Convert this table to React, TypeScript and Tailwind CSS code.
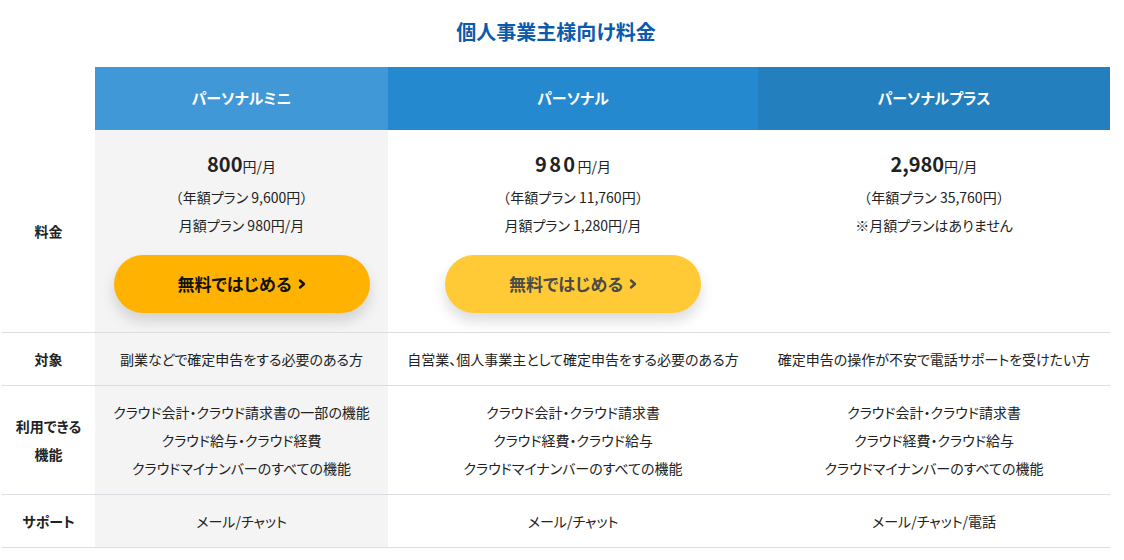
import React from 'react';

const font = { fontFamily: '"Noto Sans CJK JP", "Noto Sans", sans-serif' };

type Plan = {
  name: string;
  head: string;
  body: string;
  price: string;
  priceClass?: string;
  yearly: string;
  monthly: string;
  button?: 'primary' | 'secondary';
  target: string;
  features: string[];
  support: string;
};

const plans: Plan[] = [
  {
    name: 'パーソナルミニ',
    head: 'bg-[#4198d7]',
    body: 'bg-[#f4f4f4]',
    price: '800',
    yearly: '年額プラン 9,600円',
    monthly: '月額プラン 980円/月',
    button: 'primary',
    target: '副業などで確定申告をする必要のある方',
    features: ['クラウド会計・クラウド請求書の一部の機能', 'クラウド給与・クラウド経費', 'クラウドマイナンバーのすべての機能'],
    support: 'メール/チャット',
  },
  {
    name: 'パーソナル',
    head: 'bg-[#2589d0]',
    body: 'bg-white',
    price: '980',
    priceClass: 'tracking-[0.12em]',
    yearly: '年額プラン 11,760円',
    monthly: '月額プラン 1,280円/月',
    button: 'secondary',
    target: '自営業、個人事業主として確定申告をする必要のある方',
    features: ['クラウド会計・クラウド請求書', 'クラウド経費・クラウド給与', 'クラウドマイナンバーのすべての機能'],
    support: 'メール/チャット',
  },
  {
    name: 'パーソナルプラス',
    head: 'bg-[#237fbd]',
    body: 'bg-white',
    price: '2,980',
    yearly: '年額プラン 35,760円',
    monthly: '※月額プランはありません',
    target: '確定申告の操作が不安で電話サポートを受けたい方',
    features: ['クラウド会計・クラウド請求書', 'クラウド経費・クラウド給与', 'クラウドマイナンバーのすべての機能'],
    support: 'メール/チャット/電話',
  },
];

function Chevron() {
  return (
    <svg width="8" height="12" viewBox="0 0 8 12" className="ml-[6px]">
      <polyline points="2,2.5 6,6 2,9.5" fill="none" stroke="currentColor" strokeWidth="2.4" strokeLinecap="round" strokeLinejoin="round" />
    </svg>
  );
}

function StartButton({ kind }: { kind: 'primary' | 'secondary' }) {
  const cls =
    kind === 'primary'
      ? 'bg-[#ffb200] text-[#111]'
      : 'bg-[#ffca35] text-[#4a4a4a]';
  return (
    <div
      className={`mt-[16px] w-[256px] h-[58px] rounded-full flex items-center justify-center text-[17px] font-bold shadow-[0_8px_14px_rgba(0,0,0,0.14)] ${cls}`}
    >
      無料ではじめる
      <Chevron />
    </div>
  );
}

const rowBorder = 'border-b border-[#dcdce3]';

export default function App() {
  return (
    <div className="w-[1124px] h-[560px] bg-white text-[#222] [font-feature-settings:'palt']" style={font}>
      <div className="ml-[2px] w-[1108px] h-[67px] flex items-center justify-center pb-[3px]">
        <h1 className="text-[20px] font-bold text-[#0b5aab]">個人事業主様向け料金</h1>
      </div>

      <div className="ml-[2px] grid grid-cols-[93px_293px_370px_352px] text-[14px]">
        {/* header */}
        <div className="h-[63px]" />
        {plans.map((p) => (
          <div key={p.name} className={`h-[63px] flex items-center justify-center text-white font-bold text-[15px] ${p.head}`}>
            {p.name}
          </div>
        ))}

        {/* price */}
        <div className={`h-[203px] flex items-center justify-center font-bold ${rowBorder}`}>料金</div>
        {plans.map((p) => (
          <div key={p.name + 'price'} className={`h-[203px] flex flex-col items-center pt-[19px] ${p.body} ${rowBorder}`}>
            <div className="flex items-baseline h-[28px]">
              <span className={`text-[20px] font-bold ${p.priceClass ?? ''}`}>{p.price}</span>
              <span className="text-[14px]">円/月</span>
            </div>
            <div className="mt-[6px] h-[28px] flex items-center">
              <span className="[font-feature-settings:normal]">（</span>
              <span>{p.yearly}</span>
              <span className="[font-feature-settings:normal]">）</span>
            </div>
            <div className="h-[28px] flex items-center">{p.monthly}</div>
            {p.button && <StartButton kind={p.button} />}
          </div>
        ))}

        {/* target */}
        <div className={`h-[53px] flex items-center justify-center font-bold ${rowBorder}`}>対象</div>
        {plans.map((p) => (
          <div key={p.name + 'target'} className={`h-[53px] flex items-center justify-center ${p.body} ${rowBorder}`}>
            {p.target}
          </div>
        ))}

        {/* features */}
        <div className={`h-[109px] flex flex-col items-center justify-center font-bold leading-[28px] ${rowBorder}`}>
          <span>利用できる</span>
          <span>機能</span>
        </div>
        {plans.map((p) => (
          <div key={p.name + 'feat'} className={`h-[109px] flex flex-col items-center justify-center leading-[28px] ${p.body} ${rowBorder}`}>
            {p.features.map((f) => (
              <span key={f}>{f}</span>
            ))}
          </div>
        ))}

        {/* support */}
        <div className={`h-[53px] flex items-center justify-center font-bold ${rowBorder}`}>サポート</div>
        {plans.map((p) => (
          <div key={p.name + 'sup'} className={`h-[53px] flex items-center justify-center ${p.body} ${rowBorder}`}>
            {p.support}
          </div>
        ))}
      </div>
    </div>
  );
}
